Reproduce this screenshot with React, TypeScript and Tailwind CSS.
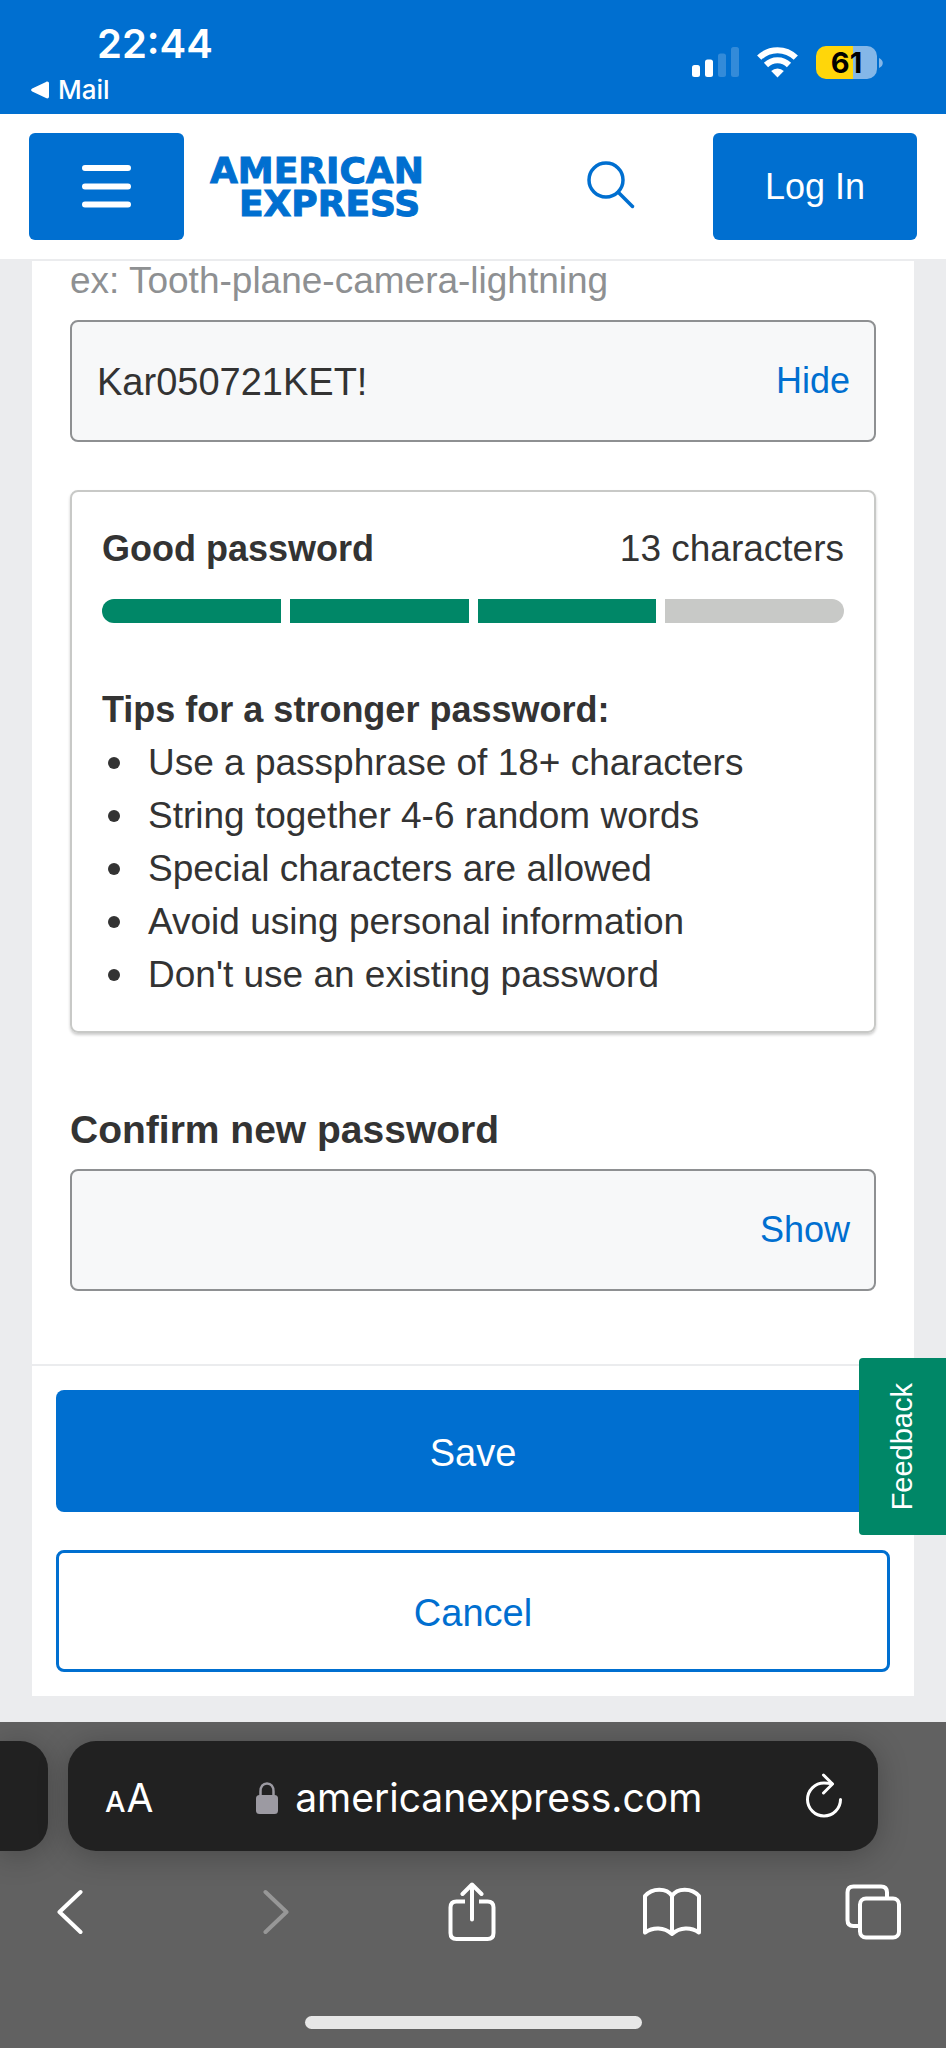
import { useState } from "react";

const tips = [
  "Use a passphrase of 18+ characters",
  "String together 4-6 random words",
  "Special characters are allowed",
  "Avoid using personal information",
  "Don't use an existing password",
];

function StatusBar() {
  return (
    <div className="flex h-[114px] items-start justify-between bg-[#006fd0] pr-[63px] pl-[31px] font-[Inter,sans-serif] text-white">
      <div className="pt-5">
        <div className="pl-[66px] text-[40px] leading-[48px] font-semibold">22:44</div>
        <a href="#mail" className="flex h-11 items-center gap-[9px] text-[26px] leading-[34px] font-medium">
          <svg width="18" height="18" viewBox="0 0 18 18" fill="currentColor" aria-hidden="true">
            <path d="M1.2 7.6 15 .9C16.6.2 18 .8 18 2.6v12.8c0 1.8-1.400 2.400-3 1.700L1.200 10.400c-1.500-.8-1.500-2 0-2.800Z" />
          </svg>
          Mail
        </a>
      </div>
      <div className="flex items-center pt-[46px]">
        <svg width="47" height="31" viewBox="0 0 47 31" fill="#fff" role="img" aria-label="Signal">
          <rect x="0" y="18" width="8" height="12" rx="2.500" />
          <rect x="13" y="12.500" width="8" height="17.500" rx="2.500" />
          <rect x="26" y="6.500" width="8" height="23.500" rx="2.500" opacity=".2" />
          <rect x="39" y="0" width="8" height="30" rx="2.500" opacity=".2" />
        </svg>
        <svg className="ml-[18px]" width="41" height="31" viewBox="0 0 41 31" fill="none" stroke="#fff" role="img" aria-label="Wi-Fi">
          <path d="M2.200 10.700a26 26 0 0 1 36.600 0" strokeWidth="6" />
          <path d="M9 18a16.300 16.300 0 0 1 23 0" strokeWidth="6" />
          <path d="M20.500 30.500 14.200 24a9 9 0 0 1 12.600 0Z" fill="#fff" stroke="none" />
        </svg>
        <div className="ml-[18px] flex h-[33px] w-[61px] items-center justify-center rounded-[10px] bg-linear-to-r from-[#ffd60a] from-61% to-[#84b7e8] to-61% text-[29px] leading-8 font-bold text-black">
          61
        </div>
        <svg className="ml-[2px]" width="4" height="10" viewBox="0 0 4 10" fill="#84b7e8" aria-hidden="true">
          <path d="M0 0c5 2 5 8 0 10Z" />
        </svg>
      </div>
    </div>
  );
}

function Header() {
  return (
    <header className="flex h-[147px] items-center border-b-2 border-[#ebecee] bg-white px-[29px] text-[#006fd0]">
      <button type="button" aria-label="Menu" className="flex h-[107px] w-[155px] items-center justify-center rounded-md bg-[#006fd0]">
        <svg width="49" height="43" viewBox="0 0 49 43" stroke="#fff" strokeWidth="6" strokeLinecap="round">
          <path d="M3 3h43M3 21.500h43M3 39.500h43" />
        </svg>
      </button>
      <a
        href="#home"
        className="ml-[26px] font-['DejaVu_Sans',sans-serif] text-[36px] leading-[33px] font-bold [-webkit-text-stroke:1px_#006fd0]"
      >
        <span className="block">AMERICAN</span>
        <span className="block pl-[29px]">EXPRESS</span>
      </a>
      <button type="button" aria-label="Search" className="mr-[78px] ml-auto pb-1">
        <svg width="48" height="50" viewBox="0 0 48 50" fill="none" stroke="currentColor" strokeWidth="3.500" strokeLinecap="round">
          <circle cx="19" cy="20" r="17" />
          <path d="m31.500 32.500 14 14" />
        </svg>
      </button>
      <button type="button" className="h-[107px] w-[204px] rounded-md bg-[#006fd0] text-[36px] text-white">
        Log In
      </button>
    </header>
  );
}

function PasswordField({ id, initial, shown, label }: { id: string; initial: string; shown: boolean; label?: string }) {
  const [visible, setVisible] = useState(shown);
  return (
    <div className="flex h-[122px] items-center rounded-lg border-2 border-[#8e9092] bg-[#f7f8f9] pr-6 pl-[25px]">
      <input
        id={id}
        aria-label={label}
        type={visible ? "text" : "password"}
        defaultValue={initial}
        className="h-full min-w-0 flex-1 bg-transparent pt-[2px] text-[38px] text-[#333] outline-none"
      />
      <button type="button" onClick={() => setVisible(!visible)} className="text-[#006fd0]">
        {visible ? "Hide" : "Show"}
      </button>
    </div>
  );
}

function StrengthCard() {
  return (
    <section className="mt-12 rounded-lg border-2 border-[#c8c9c7] px-[30px] pt-[30px] pb-[30px] shadow-[0_2px_3px_rgba(0,0,0,0.2)]">
      <div className="flex justify-between leading-[54px]">
        <strong>Good password</strong>
        <span className="text-[37px]">13 characters</span>
      </div>
      <div className="mt-[23px] grid h-6 grid-cols-4 gap-[9px] overflow-hidden rounded-full" role="img" aria-label="Strength 3 of 4">
        <span className="bg-[#008767]" />
        <span className="bg-[#008767]" />
        <span className="bg-[#008767]" />
        <span className="bg-[#c8c9c7]" />
      </div>
      <h2 className="mt-[60px] leading-[53px] font-bold">Tips for a stronger password:</h2>
      <ul className="text-[37px] leading-[53px]">
        {tips.map((tip) => (
          <li key={tip} className="flex items-center gap-[28px] pl-[6px]">
            <span className="size-3 shrink-0 rounded-full bg-[#333]" />
            {tip}
          </li>
        ))}
      </ul>
    </section>
  );
}

function BrowserBar() {
  return (
    <footer className="overflow-hidden bg-[#616161] pt-[19px] font-[Inter,sans-serif] text-white">
      <div className="flex gap-5 pr-[68px]">
        <div className="h-[110px] w-12 shrink-0 rounded-r-[28px] bg-[#212121] shadow-[0_4px_30px_rgba(0,0,0,0.25)]" />
        <div className="flex h-[110px] flex-1 items-center justify-between rounded-[28px] bg-[#212121] pr-[34px] pl-[37px] shadow-[0_4px_30px_rgba(0,0,0,0.25)]">
          <button type="button" aria-label="Page settings" className="flex items-baseline gap-px pt-1">
            <span className="text-[29px] font-medium">A</span>
            <span className="text-[39px]">A</span>
          </button>
          <div className="flex items-center gap-[17px] pt-1 text-[39px]">
            <svg width="22" height="32" viewBox="0 0 22 32" fill="none" aria-hidden="true">
              <rect y="13" width="22" height="19" rx="3.500" fill="#9c9aa2" />
              <path d="M4.500 15V9.500C4.500 4.500 7 1.500 11 1.500s6.500 3 6.500 8V15" stroke="#9c9aa2" strokeWidth="2.500" />
            </svg>
            americanexpress.com
          </div>
          <button type="button" aria-label="Reload" className="pr-px pb-[2px]">
            <svg width="38" height="46" viewBox="0 0 38 46" fill="none" stroke="currentColor" strokeWidth="3" strokeLinecap="round" strokeLinejoin="round">
              <path d="M35.500 27.500A16.500 16.500 0 1 1 19 11c3 0 5 .2 8 .8" />
              <path d="m18.500 3 9 9-9 9" />
            </svg>
          </button>
        </div>
      </div>
      <nav className="mt-[22px] flex h-[78px] items-center justify-between pr-[33px] pl-[30px]">
        <button type="button" aria-label="Back" className="flex w-20 justify-center">
          <svg width="26" height="46" viewBox="0 0 26 46" fill="none" stroke="currentColor" strokeWidth="4" strokeLinecap="round" strokeLinejoin="round">
            <path d="M23.500 3 2.500 23l21 20" />
          </svg>
        </button>
        <button type="button" aria-label="Forward" className="flex w-20 justify-center pl-[10px]">
          <svg width="26" height="46" viewBox="0 0 26 46" fill="none" stroke="#979797" strokeWidth="4" strokeLinecap="round" strokeLinejoin="round">
            <path d="m2.500 3 21 20-21 20" />
          </svg>
        </button>
        <button type="button" aria-label="Share" className="flex w-20 justify-center">
          <svg width="48" height="60" viewBox="0 0 48 60" fill="none" stroke="currentColor" strokeWidth="4" strokeLinecap="round" strokeLinejoin="round">
            <path d="M17 19.500H8.500c-4 0-6 2-6 6V51c0 4 2 6 6 6h31c4 0 6-2 6-6V25.500c0-4-2-6-6-6H31" strokeLinecap="butt" />
            <path d="M24 37.500V2.500M14.500 12 24 2.500l9.500 9.500" />
          </svg>
        </button>
        <button type="button" aria-label="Bookmarks" className="flex w-20 justify-center">
          <svg width="60" height="50" viewBox="0 0 60 50" fill="none" stroke="currentColor" strokeWidth="4" strokeLinecap="round" strokeLinejoin="round">
            <path d="M30 47C22 40 11 40 3 45.500V9C10 .5 25 .5 30 9c5-8.500 20-8.500 27 0v36.500C49 40 38 40 30 47V9" />
          </svg>
        </button>
        <button type="button" aria-label="Tabs" className="flex w-20 justify-center">
          <svg width="56" height="56" viewBox="0 0 56 56" fill="none" stroke="currentColor" strokeWidth="4">
            <path d="M14 42H8.500c-4 0-6-2-6-6V8.500c0-4 2-6 6-6H36c4 0 6 2 6 6V14" />
            <rect x="15" y="14.500" width="39" height="39" rx="6" />
          </svg>
        </button>
      </nav>
      <div className="mx-auto mt-[65px] mb-[19px] h-[13px] w-[337px] rounded-full bg-[#e7e7e7]" />
    </footer>
  );
}

export default function App() {
  return (
    <div className="min-h-screen bg-[#ebecee] font-['Liberation_Sans',Arial,sans-serif] text-[36px] text-[#333]">
      <StatusBar />
      <Header />
      <main className="px-8 pb-[26px]">
        <form className="bg-white" onSubmit={(e) => e.preventDefault()}>
          <div className="px-[38px] pb-[73px]">
            <p className="mb-[19px] text-[37px] leading-10 text-[#8e9092]">ex: Tooth-plane-camera-lightning</p>
            <PasswordField id="new-password" label="New password" initial="Kar050721KET!" shown />
            <StrengthCard />
            <label htmlFor="confirm-password" className="mt-[73px] mb-[15px] block text-[39px] leading-[48px] font-bold">
              Confirm new password
            </label>
            <PasswordField id="confirm-password" initial="" shown={false} />
          </div>
          <div className="relative flex flex-col gap-[38px] border-t-2 border-[#ebecee] p-6 text-[38px]">
            <button type="submit" className="h-[122px] rounded-lg bg-[#006fd0] pt-1 text-white">
              Save
            </button>
            <button type="button" className="h-[122px] rounded-lg border-[3px] border-[#006fd0] pt-1 text-[#006fd0]">
              Cancel
            </button>
            <button
              type="button"
              className="absolute -top-2 -right-8 flex h-[177px] w-[87px] items-center justify-center rounded-l bg-[#008767] text-[29px] text-white"
            >
              <span className="rotate-180 [writing-mode:vertical-rl]">Feedback</span>
            </button>
          </div>
        </form>
      </main>
      <BrowserBar />
    </div>
  );
}
